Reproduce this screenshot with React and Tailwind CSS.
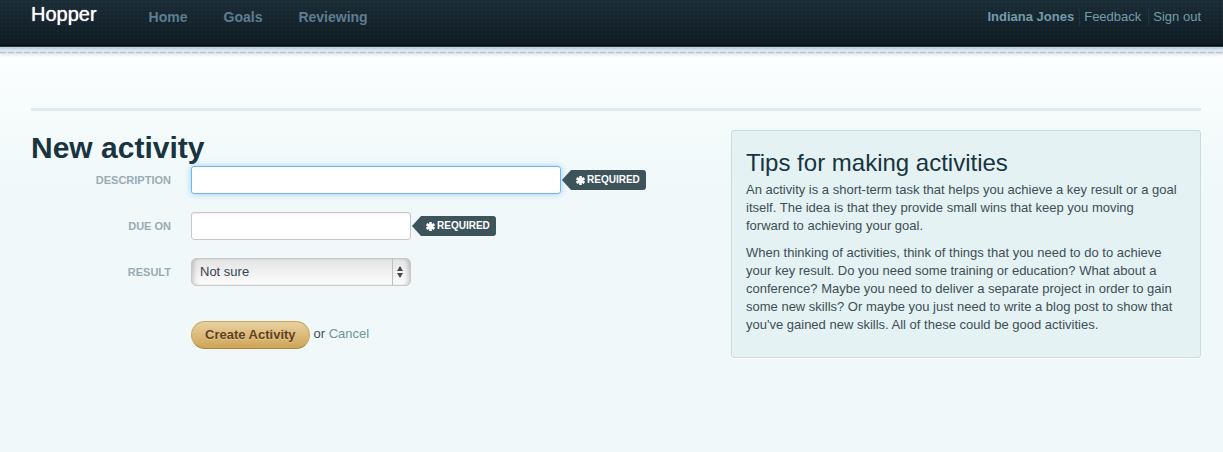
const asterisk = (
  <svg viewBox="0 0 9 9" className="h-[9px] w-[9px] shrink-0" stroke="currentColor" strokeWidth="2.6" aria-hidden="true">
    <path d="M4.5 0v9M0.6 2.25l7.8 4.5M8.4 2.25l-7.8 4.5" />
  </svg>
);

function RequiredTag() {
  return (
    <span className="ml-px flex items-center text-white">
      <svg viewBox="0 0 9 20" className="h-5 w-[9px] fill-[#3e545b]" aria-hidden="true">
        <path d="M9 0L0 10l9 10z" />
      </svg>
      <span className="flex h-5 items-center gap-0.5 rounded-r-[3px] bg-[#3e545b] pr-1.5 pl-[5px] text-[10px] font-bold">
        {asterisk}
        REQUIRED
      </span>
    </span>
  );
}

function Field({ id, label, children }) {
  return (
    <div className="flex items-center">
      <label htmlFor={id} className="w-[140px] text-right text-[11px] font-bold text-[#99acb5] uppercase">
        {label}
      </label>
      <div className="ml-5 flex items-center">{children}</div>
    </div>
  );
}

const inputStyle = "h-7 rounded-[3px] border bg-white px-1 text-[13px] outline-none";

export default function App() {
  return (
    <div className="min-h-screen bg-[#f0f8fa] bg-[linear-gradient(#fdffff_50px,#f5fbfb_120px,#f0f8fa_200px)] font-['Liberation_Sans',Arial,sans-serif] text-[13px] leading-[18px] text-[#3e4e56]">
      <header className="border-b border-[#20424d] bg-[radial-gradient(#ffffff05_1px,transparent_1px),linear-gradient(#1a2d37,#0e1a21)] bg-[size:4px_4px,100%_100%] shadow-[inset_0_-1px_#02080c]">
        <div className="flex h-[46px] items-start pr-[22px] pl-[31px]">
          <a href="#" className="mt-1 text-[20px] leading-5 text-white [text-shadow:0_0_1px_#fff]">Hopper</a>
          <nav className="mt-2 ml-[52px] flex gap-9 text-[14px] font-bold text-[#5f7d90]">
            <a href="#">Home</a>
            <a href="#">Goals</a>
            <a href="#">Reviewing</a>
          </nav>
          <nav className="mt-2 ml-auto flex text-[#739caa]">
            <a href="#" className="pr-[5px] font-bold">Indiana Jones</a>
            <a href="#" className="border-l border-[#1d3347] px-1">Feedback</a>
            <a href="#" className="ml-[3px] border-l border-[#1d3347] pl-1">Sign out</a>
          </nav>
        </div>
      </header>
      <div className="h-[7px] bg-[linear-gradient(#c6d1db_2px,#d9e6ed_2px)] pt-[5px] shadow-[0_1px_3px_#0000001a]">
        <div className="h-px bg-[repeating-linear-gradient(90deg,#abc5d3_0_6px,transparent_6px_8px)]" />
      </div>
      <main className="pr-[22px] pl-[31px]">
        <hr className="mt-[54px] border-t-[3px] border-[#deecef]" />
        <div className="mt-[19px] flex items-start justify-between">
          <section>
            <h1 className="text-[30px] leading-9 font-bold text-[#183440]">New activity</h1>
            <form className="flex flex-col gap-[18px]">
              <Field id="description" label="Description">
                <input id="description" className={`${inputStyle} w-[370px] border-[#73b6ed] shadow-[0_0_6px_#73b6edaa]`} />
                <RequiredTag />
              </Field>
              <Field id="due" label="Due on">
                <input id="due" className={`${inputStyle} w-[220px] border-[#c8c8c8] shadow-[inset_0_1px_1px_#00000010]`} />
                <RequiredTag />
              </Field>
              <Field id="result" label="Result">
                <div className="grid items-center">
                  <select id="result" className="col-start-1 row-start-1 h-7 w-[220px] appearance-none rounded-[5px] border border-[#c8c8c8] bg-[linear-gradient(#e4e4e4,#fcfcfc)] px-2 text-[13px] text-[#37424f] shadow-[inset_4px_0_4px_-2px_#0000002e,inset_-4px_0_4px_-2px_#0000002e] outline-none">
                    <option>Not sure</option>
                  </select>
                  <span className="pointer-events-none col-start-1 row-start-1 flex h-[26px] w-[19px] items-center justify-center justify-self-end border-l border-[#c0c0c0] pr-1">
                    <svg viewBox="0 0 6 12" className="h-3 w-1.5 fill-[#474757]" aria-hidden="true">
                      <path d="M3 0l3 5H0zM0 7h6l-3 5z" />
                    </svg>
                  </span>
                </div>
              </Field>
              <div className="mt-[17px] ml-40 flex items-center gap-1">
                <button type="button" className="h-7 rounded-full border border-[#c9a763] border-b-[#a8853f] bg-[linear-gradient(#e8d1a0,#cfa556)] px-[13px] font-bold text-[#62401c] [text-shadow:0_1px_#ffffff4d]">
                  Create Activity
                </button>
                <span className="pb-0.5">or <a href="#" className="text-[#6f959d]">Cancel</a></span>
              </div>
            </form>
          </section>
          <aside className="w-[470px] rounded-[3px] border border-[#c6dcdd] bg-[#e4f2f3] pt-3.5 pr-[21px] pb-3.5 pl-3.5 shadow-[0_1px_#ffffff]">
            <h2 className="text-[24px] leading-9 text-[#183440]">Tips for making activities</h2>
            <p className="mb-[9px]">
              An activity is a short-term task that helps you achieve a key result or a goal itself. The idea is that they provide small wins that keep you moving forward to achieving your goal.
            </p>
            <p className="mb-[9px]">
              When thinking of activities, think of things that you need to do to achieve your key result. Do you need some training or education? What about a conference? Maybe you need to deliver a separate project in order to gain some new skills? Or maybe you just need to write a blog post to show that you've gained new skills. All of these could be good activities.
            </p>
          </aside>
        </div>
      </main>
    </div>
  );
}
